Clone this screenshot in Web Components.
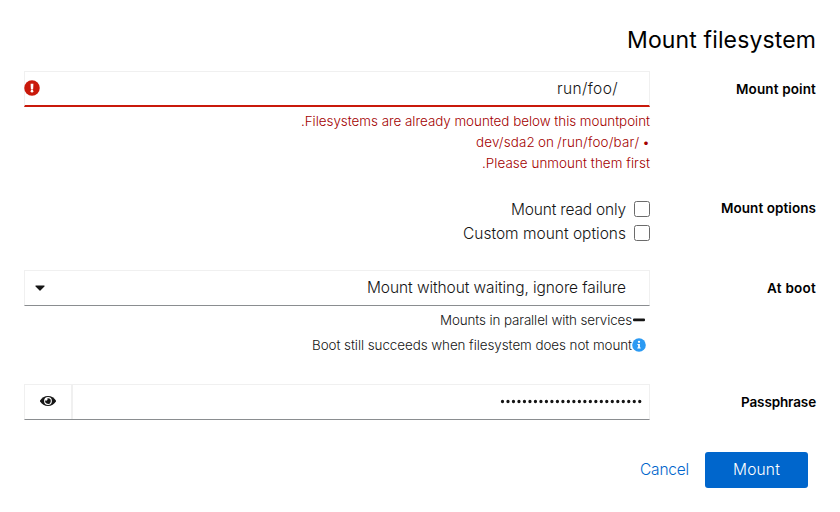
<!DOCTYPE html>
<html lang="en" dir="rtl">
<head>
<meta charset="utf-8">
<title>Mount filesystem</title>
<style>
html,body{margin:0;background:#fff}
body{font-family:Inter,"Liberation Sans",sans-serif;color:#151515}
</style>
</head>
<body>
<mount-dialog></mount-dialog>
<script>
const define = (name, html, init) => {
  const t = document.createElement('template');
  t.innerHTML = html;
  customElements.define(name, class extends HTMLElement {
    constructor() {
      super();
      this.attachShadow({mode: 'open'}).append(t.content.cloneNode(true));
    }
    connectedCallback() { if (init) init.call(this); }
  });
};

/* A single line of text whose tracking is adjusted to a given width. */
define('fit-text', `<style>
:host{display:inline-block;white-space:nowrap}
</style><slot></slot>`, function () {
  const target = +this.getAttribute('w');
  const n = this.textContent.length;
  const natural = this.getBoundingClientRect().width;
  if (target && natural) {
    this.style.letterSpacing = ((target - natural) / n) + 'px';
    this.style.width = target + 'px';
  }
});

define('form-row', `<style>
:host{display:grid;grid-template-columns:150px 626px;column-gap:16px;align-items:start}
.label{padding-top:var(--label-top,8px);font-size:13.5px;line-height:21px;font-weight:600;color:#000}
</style><div class="label"><slot name="label"></slot></div><div><slot></slot></div>`);

define('form-box', `<style>
:host{display:flex;align-items:center;box-sizing:border-box;height:36px;border:1px solid #f0f0f0;border-bottom:1px solid #8a8d90;font-size:15.5px;line-height:24px;justify-content:space-between}
:host([invalid]){border-bottom:2px solid #c9190b}
</style><slot></slot>`);

define('check-option', `<style>
:host{display:flex;align-items:center;height:24px;font-size:15.5px;line-height:24px;gap:8px}
i{box-sizing:border-box;width:16px;height:16px;border:1px solid #6b6b6b;border-radius:2.5px;background:#fff}
div{padding-top:1px}
</style><i></i><div><slot></slot></div>`);

define('action-button', `<style>
:host{display:flex;align-items:center;justify-content:center;box-sizing:border-box;height:36px;padding-bottom:2px;font-size:15.5px;color:#06c;border-radius:3px}
:host([primary]){width:103px;background:#06c;color:#fff}
</style><slot></slot>`);

define('mount-dialog', `<style>
:host{display:block;box-sizing:border-box;width:840px;height:512px;padding:24px;font-weight:300}
h1{margin:0;height:47px;font-size:23px;line-height:33px;font-weight:400;color:#000}
.error{margin-top:4px;height:63px;font-size:13.4px;line-height:21px;color:#a30000}
.error div,.hint{display:flex}
.error .item{word-spacing:-1px}
.options{margin-top:23px}
.boot{margin-top:25px}
.hint{align-items:center;height:25px;font-size:13.4px;padding-inline-start:4px}
.hint fit-text{margin-bottom:1px}
.hints{padding-top:2px}
.hint svg{margin-bottom:1px}
.pass{margin-top:26px}
.value{margin-inline-start:23px}
.path{margin-inline-start:31px}
.caret{margin-inline-end:10px}
.alert{margin-bottom:2px;margin-inline-end:-1px}
.eye{display:flex;align-items:center;justify-content:center;width:46px;height:34px;border-inline-start:2px solid #f0f0f0}
.eye svg{margin-bottom:2px}
.dots{margin-inline-start:7px;margin-bottom:1px}
footer{display:flex;margin-top:32px;padding-inline-start:8px;gap:16px}
svg{display:block}
</style>
<h1><fit-text w="189">Mount filesystem</fit-text></h1>
<form-row><fit-text slot="label" w="80">Mount point</fit-text>
  <form-box invalid><fit-text class="path" w="61">/run/foo</fit-text>
    <svg class="alert" width="16" height="16" viewBox="0 0 512 512"><path fill="#c9190b" d="M504 256a248 248 0 1 1-496 0 248 248 0 0 1 496 0Z"/><path fill="#fff" d="M211 118h90l-10 182h-70z"/><circle cx="256" cy="357" r="43" fill="#fff"/></svg>
  </form-box>
  <div class="error"><div><fit-text w="349">Filesystems are already mounted below this mountpoint.</fit-text></div><div class="item"><fit-text w="174">• /dev/sda2 on /run/foo/bar</fit-text></div><div><fit-text w="168">Please unmount them first.</fit-text></div></div>
</form-row>
<form-row class="options" style="--label-top:1px"><fit-text slot="label" w="95">Mount options</fit-text>
  <check-option><fit-text w="115">Mount read only</fit-text></check-option>
  <check-option><fit-text w="163">Custom mount options</fit-text></check-option>
</form-row>
<form-row class="boot"><fit-text slot="label" w="49">At boot</fit-text>
  <form-box><fit-text class="value" w="259">Mount without waiting, ignore failure</fit-text>
    <svg class="caret" width="10" height="16" viewBox="0 0 320 512"><path fill="#151515" d="M31.3 176h257.300c17.800 0 26.700 21.500 14.100 34.100L174.100 338.800c-7.800 7.800-20.500 7.800-28.300 0L17.200 210.100C4.600 197.500 13.500 176 31.300 176z"/></svg>
  </form-box>
  <div class="hints">
  <div class="hint"><svg width="14" height="14" viewBox="0 0 14 14"><rect x="1" y="5.600" width="12" height="2.700" rx="1" fill="#151515"/></svg><fit-text w="192">Mounts in parallel with services</fit-text></div>
  <div class="hint"><svg width="14" height="14" viewBox="0 0 14 14"><circle cx="7" cy="7" r="6.800" fill="#2b9af3"/><circle cx="7" cy="3.800" r="1.150" fill="#fff"/><path fill="#fff" d="M5.400 5.900h2.500v3.500h.8v1.200H5.300V9.400h.8V7.100h-.7z"/></svg><fit-text w="320">Boot still succeeds when filesystem does not mount</fit-text></div>
  </div>
</form-row>
<form-row class="pass"><fit-text slot="label" w="75">Passphrase</fit-text>
  <form-box><svg class="dots" width="142" height="5" viewBox="0 0 142 5"><path d="M2.500 2.500h137.600" fill="none" stroke="#151515" stroke-width="3.300" stroke-linecap="round" stroke-dasharray="0 5.490"/></svg><div class="eye">
    <svg width="16" height="16" viewBox="0 0 16 16"><path fill="#151515" d="M8 3C4.600 3 1.700 4.900.1 7.500a1 1 0 0 0 0 1C1.700 11.100 4.600 13 8 13s6.300-1.900 7.900-4.500a1 1 0 0 0 0-1C14.300 4.900 11.400 3 8 3z"/><circle cx="8" cy="8" r="3.900" fill="#fff"/><path fill="#151515" d="M8 5.300a2.800 2.800 0 1 1-2.700 2A1.400 1.400 0 0 0 7.300 5.400z"/></svg>
  </div></form-box>
</form-row>
<footer><action-button primary><fit-text w="47">Mount</fit-text></action-button><action-button><fit-text w="49">Cancel</fit-text></action-button></footer>`);
</script>
</body>
</html>
